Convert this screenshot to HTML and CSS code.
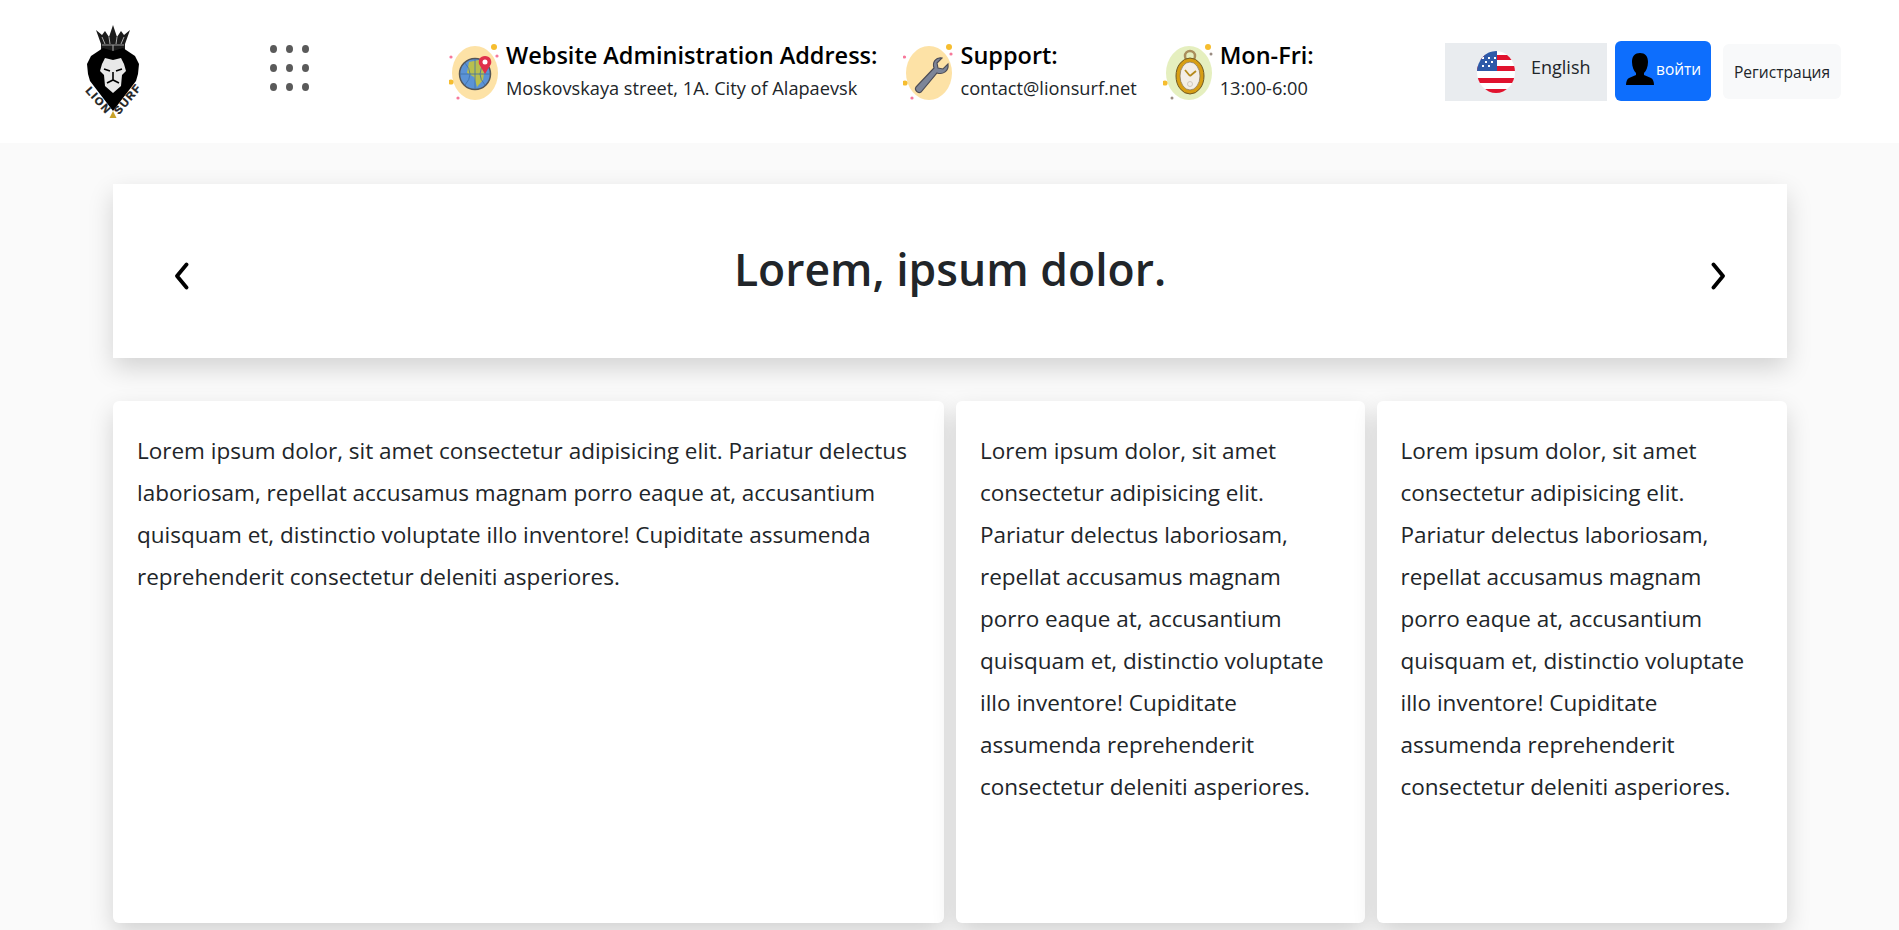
FILE: index.html
```html
<!DOCTYPE html>
<html lang="en">
<head>
<meta charset="utf-8">
<title>Lion Surf</title>
<link rel="stylesheet" href="styles.css">
</head>
<body>
<header class="topbar">
  <a class="logo" href="#" aria-label="Lion Surf">
    <svg class="logo-art" width="62" height="94" viewBox="0 0 62 94">
      <path d="M13 5l6 5 3-4 4 6 4-12 4 12 4-6 3 4 6-5-5 14v7H18v-7z" fill="#1c1c1c"/>
      <path d="M19 12l3 7M26 12l1 7M34 12l-1 7M41 12l-3 7" stroke="#aaa" stroke-width="1"/>
      <path d="M19 20h22M30 20v6" stroke="#999" stroke-width="1.200"/>
      <path d="M20 23L30 26 40 23 52 31 56 39 55 49 53 56 30 86 7 56 5 49 4 39 8 31z" fill="#000"/>
      <path d="M22 33l8 2 8-2 3 6 2 7-4 4-1 11-8 7-8-7-1-11-4-4 2-7z" fill="#e8e8e8"/>
      <path d="M21 44l6 2M39 44l-6 2M24 58l6-3 6 3M30 47v8" stroke="#000" stroke-width="1.600" fill="none"/>
      <text class="logo-text" transform="translate(2 66) rotate(48)">LION</text>
      <text class="logo-text" transform="translate(36 90) rotate(-50)">SURF</text>
      <path d="M26.500 93l3.500-7 3.500 7z" fill="#c9a227"/>
    </svg>
  </a>
  <button class="apps" aria-label="Menu">
    <i></i><i></i><i></i><i></i><i></i><i></i><i></i><i></i><i></i>
  </button>
  <div class="infos">
    <div class="info">
      <svg class="info-icon" viewBox="0 0 52 56" width="52" height="56">
        <ellipse cx="26" cy="29" rx="23" ry="27" fill="#fde2a6"/>
        <circle cx="26" cy="30" r="15.500" fill="#5b93d6" stroke="#555" stroke-width="1.500"/>
        <path d="M20 18l10-2 6 8-2 12-6 7-3-10-7-4z" fill="#b9bf4e"/>
        <path d="M11 30h30M26 15v30M16 19q10 11 0 22M36 19q-10 11 0 22" stroke="#3c6ea8" stroke-width=".8" fill="none"/>
        <path d="M36 12c-5 0-7 4-6 8l6 10 6-10c1-4-1-8-6-8z" fill="#e0314b"/>
        <circle cx="36" cy="18" r="2.500" fill="#fff"/>
        <circle cx="45" cy="3" r="3" fill="#f6bd2f"/>
        <circle cx="2" cy="13" r="1.600" fill="#f7789a"/>
        <circle cx="48" cy="12" r="1.600" fill="#f7789a"/>
        <circle cx="2" cy="38" r="2.600" fill="#f6bd2f"/>
        <circle cx="9" cy="54" r="1.600" fill="#f7789a"/>
      </svg>
      <div class="info-text"><strong>Website Administration Address:</strong><span>Moskovskaya street, 1A. City of Alapaevsk</span></div>
    </div>
    <div class="info">
      <svg class="info-icon" viewBox="0 0 52 56" width="52" height="56">
        <ellipse cx="26" cy="29" rx="23" ry="27" fill="#fde2a6"/>
        <path d="M13 43l18-19c-2-6 2-11 8-10l-5 5 1 5 5 1 5-5c1 7-5 11-11 9L18 48c-3 2-7-2-5-5z" fill="#7d8598" stroke="#4c4c55" stroke-width="1.100"/>
        <circle cx="46" cy="3" r="3" fill="#f6bd2f"/>
        <circle cx="1.500" cy="13" r="1.600" fill="#f7789a"/>
        <circle cx="48" cy="10" r="1.600" fill="#f7789a"/>
        <circle cx="2" cy="39" r="2.600" fill="#f6bd2f"/>
        <circle cx="9" cy="54" r="1.600" fill="#f7789a"/>
      </svg>
      <div class="info-text"><strong>Support:</strong><span>contact@lionsurf.net</span></div>
    </div>
    <div class="info">
      <svg class="info-icon" viewBox="0 0 52 56" width="52" height="56">
        <ellipse cx="26" cy="29" rx="23" ry="27" fill="#e5efbf"/>
        <circle cx="27" cy="12" r="5" fill="none" stroke="#a98e5c" stroke-width="2.500"/>
        <ellipse cx="27" cy="32" rx="14" ry="18" fill="#d79e13" stroke="#6f5a25" stroke-width="1"/>
        <ellipse cx="27" cy="32" rx="10" ry="14" fill="#f3eee6" stroke="#8b7a55" stroke-width=".8"/>
        <path d="M27 32l-5-6M27 32l6-5" stroke="#b58a1c" stroke-width="1.800" fill="none"/>
        <circle cx="27" cy="40" r="2.500" fill="none" stroke="#cfc8bd"/>
        <circle cx="45" cy="3" r="3" fill="#f6bd2f"/>
        <circle cx="48" cy="10" r="1.500" fill="#9a8c82"/>
        <circle cx="2" cy="39" r="2.600" fill="#f6bd2f"/>
        <circle cx="9" cy="54" r="1.500" fill="#9a8c82"/>
      </svg>
      <div class="info-text"><strong>Mon-Fri:</strong><span>13:00-6:00</span></div>
    </div>
  </div>
  <div class="actions">
    <button class="lang">
      <svg width="38" height="44" viewBox="0 0 38 44">
        <defs><clipPath id="flag"><ellipse cx="19" cy="22" rx="19" ry="21"/></clipPath></defs>
        <g clip-path="url(#flag)">
          <rect width="38" height="44" fill="#fff"/>
          <path d="M0 5h38v5H0zM0 16h38v5H0zM0 28h38v5H0zM0 39h38v5H0z" fill="#e0132e"/>
          <rect width="20" height="21" fill="#2e5aa8"/>
          <path d="M5 8h2M11 8h2M17 8h2M8 12h2M14 12h2M5 16h2M11 16h2" stroke="#fff" stroke-width="2"/>
        </g>
      </svg>
      <span class="lang-name">English</span>
    </button>
    <button class="login">
      <svg width="28" height="32" viewBox="0 0 28 32">
        <path d="M14 0c5 0 8 3 8 9 0 5-2 9-4 11v2l7 3c2 1 3 4 3 7H0c0-3 1-6 3-7l7-3v-2c-2-2-4-6-4-11 0-6 3-9 8-9z" fill="#000"/>
      </svg>
      <span>войти</span>
    </button>
    <button class="register">Регистрация</button>
  </div>
</header>
<main class="page">
  <section class="banner">
    <svg class="chev" width="15" height="28" viewBox="0 0 15 28"><path d="M12.500 2.500L3 14l9.500 11.500" fill="none" stroke="#000" stroke-width="3.800" stroke-linecap="round" stroke-linejoin="round"/></svg>
    <h1>Lorem, ipsum dolor.</h1>
    <svg class="chev" width="15" height="28" viewBox="0 0 15 28"><path d="M2.500 2.500L12 14 2.500 25.500" fill="none" stroke="#000" stroke-width="3.800" stroke-linecap="round" stroke-linejoin="round"/></svg>
  </section>
  <section class="cards">
    <article class="card">Lorem ipsum dolor, sit amet consectetur adipisicing elit. Pariatur delectus laboriosam, repellat accusamus magnam porro eaque at, accusantium quisquam et, distinctio voluptate illo inventore! Cupiditate assumenda reprehenderit consectetur deleniti asperiores.</article>
    <article class="card">Lorem ipsum dolor, sit amet consectetur adipisicing elit. Pariatur delectus laboriosam, repellat accusamus magnam porro eaque at, accusantium quisquam et, distinctio voluptate illo inventore! Cupiditate assumenda reprehenderit consectetur deleniti asperiores.</article>
    <article class="card">Lorem ipsum dolor, sit amet consectetur adipisicing elit. Pariatur delectus laboriosam, repellat accusamus magnam porro eaque at, accusantium quisquam et, distinctio voluptate illo inventore! Cupiditate assumenda reprehenderit consectetur deleniti asperiores.</article>
  </section>
</main>
</body>
</html>
```
FILE: styles.css
```css
* { box-sizing: border-box; }
html, body { margin: 0; height: 100%; overflow: hidden; }
body {
  background: #fafafa;
  color: #212529;
  font-family: "Open Sans", "Noto Sans", sans-serif;
}
button { font: inherit; border: 0; padding: 0; cursor: pointer; }
.topbar {
  height: 143px;
  background: #fff;
  display: flex;
  align-items: center;
  padding: 0 58px 0 83px;
}
.logo { display: block; width: 62px; height: 94px; }
.logo-art { overflow: visible; }
.logo-text { font: 900 11px "Liberation Sans", sans-serif; fill: #222; stroke: #222; stroke-width: .4px; letter-spacing: 1.500px; }
.apps {
  width: 39px;
  height: 46px;
  margin-left: 125px;
  margin-bottom: 7px;
  background: none;
  display: grid;
  grid-template-columns: repeat(3, 7px);
  grid-template-rows: repeat(3, 8px);
  justify-content: space-between;
  align-content: space-between;
}
.apps i { display: block; background: #5a5a5a; border-radius: 50%; }
.infos { display: flex; align-items: center; margin-left: 140px; margin-bottom: 2px; }
.info { display: flex; align-items: center; gap: 5px; margin-right: 26px; }
.info:last-child { margin-right: 0; }
.info-icon { flex: none; margin-top: 2px; }
.info-text { display: flex; flex-direction: column; color: #000; }
.info-text strong { font-size: 23.500px; line-height: 32px; font-weight: 600; }
.info-text span { font-size: 18.200px; line-height: 27px; margin-top: 4px; color: #212529; }
.actions { display: flex; align-items: center; margin-left: auto; gap: 8px; }
.lang {
  width: 162px;
  height: 58px;
  background: #e9ecef;
  color: #212529;
  display: flex;
  align-items: center;
  padding-left: 32px;
  gap: 16px;
  font-size: 18px;
}
.lang-name { margin-bottom: 10px; }
.login {
  width: 96px;
  height: 60px;
  margin-bottom: 1px;
  background: #0d6efd;
  color: #fff;
  border-radius: 6px;
  display: flex;
  align-items: center;
  padding: 0 0 4px 11px;
  gap: 2px;
  font-size: 15.500px;
}
.register {
  width: 118px;
  height: 55px;
  margin-left: 4px;
  background: #f8f9fa;
  color: #212529;
  border-radius: 6px;
  font-size: 15.600px;
}
.page { padding: 41px 112px 0 113px; }
.banner {
  height: 174px;
  background: #fff;
  box-shadow: 0 10px 24px rgba(0, 0, 0, .16);
  display: flex;
  align-items: center;
  justify-content: space-between;
  padding: 0 61px;
}
.chev { margin-top: 10px; }
.banner h1 { margin: 0 0 4px; font-size: 44.500px; font-weight: 600; line-height: 1.2; }
.cards {
  margin-top: 43px;
  display: grid;
  grid-template-columns: 831px 408.500px 1fr;
  gap: 12px;
}
.card {
  height: 522px;
  background: #fff;
  border-radius: 6px;
  box-shadow: 0 10px 24px rgba(0, 0, 0, .16);
  padding: 29px 24px;
  font-size: 22.500px;
  line-height: 42px;
}
```
